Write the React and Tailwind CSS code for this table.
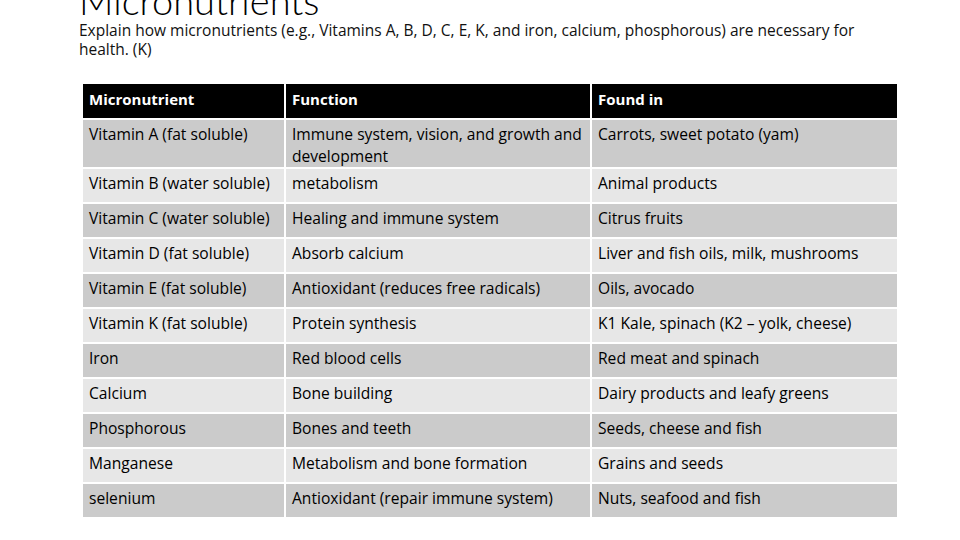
import React from "react";

const rows = [
  ["Vitamin A (fat soluble)", "Immune system, vision, and growth and development", "Carrots, sweet potato (yam)"],
  ["Vitamin B (water soluble)", "metabolism", "Animal products"],
  ["Vitamin C (water soluble)", "Healing and immune system", "Citrus fruits"],
  ["Vitamin D (fat soluble)", "Absorb calcium", "Liver and fish oils, milk, mushrooms"],
  ["Vitamin E (fat soluble)", "Antioxidant (reduces free radicals)", "Oils, avocado"],
  ["Vitamin K (fat soluble)", "Protein synthesis", "K1 Kale, spinach (K2 \u2013 yolk, cheese)"],
  ["Iron", "Red blood cells", "Red meat and spinach"],
  ["Calcium", "Bone building", "Dairy products and leafy greens"],
  ["Phosphorous", "Bones and teeth", "Seeds, cheese and fish"],
  ["Manganese", "Metabolism and bone formation", "Grains and seeds"],
  ["selenium", "Antioxidant (repair immune system)", "Nuts, seafood and fish"],
];

export default function App() {
  return (
    <div className="w-[960px] h-[540px] bg-white overflow-hidden" style={{ fontFamily: "'Open Sans', sans-serif" }}>
      <div className="pl-[79px] pr-[70px]">
        <div className="text-[38px] font-light leading-[38px] h-[38px] text-black -mt-[19px] whitespace-nowrap" style={{ fontFamily: "Lato, sans-serif" }}>
          Micronutrients
        </div>
        <p className="mt-[2px] text-[15.5px] leading-[19px] text-[#111]">
          Explain how micronutrients (e.g., Vitamins A, B, D, C, E, K, and iron, calcium, phosphorous) are necessary for health. (K)
        </p>
      </div>
      <div className="ml-[83px] mt-[25px] grid grid-cols-[201px_304px_305px] gap-x-[2px] gap-y-[2px] text-[15.6px] leading-[22px]">
        <div className="bg-black text-white font-bold text-[15px] h-[34px] pl-[6px] pt-[4px]">Micronutrient</div>
        <div className="bg-black text-white font-bold text-[15px] h-[34px] pl-[6px] pt-[4px]">Function</div>
        <div className="bg-black text-white font-bold text-[15px] h-[34px] pl-[6px] pt-[4px]">Found in</div>
        {rows.map((r, i) => {
          const bg = i % 2 === 0 ? "bg-[#cbcbcb]" : "bg-[#e7e7e7]";
          const h = i === 0 ? "h-[47px]" : "h-[33px]";
          return r.map((c, j) => (
            <div key={i + "-" + j} className={`${bg} ${h} pl-[6px] pr-[2px] pt-[3px] text-black`}>
              {c}
            </div>
          ));
        })}
      </div>
    </div>
  );
}
